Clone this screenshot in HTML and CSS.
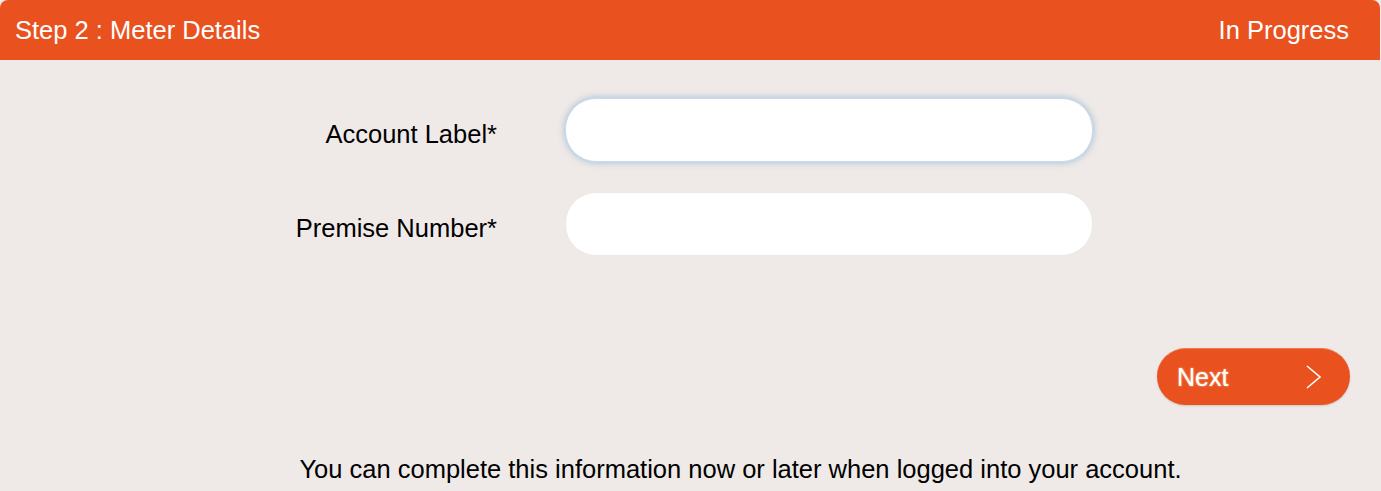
FILE: index.html
```html
<!DOCTYPE html>
<html lang="en">
<head>
    <meta charset="UTF-8">
    <meta name="viewport" content="width=device-width, initial-scale=1.0">
    <title>Meter Details</title>
    <link rel="stylesheet" href="styles.css">
</head>
<body>
    <div class="step-header">
        <span class="step-title">Step 2 : Meter Details</span>
        <span class="step-status">In Progress</span>
    </div>

    <div class="step-body">
        <div class="form-row">
            <label class="form-label" for="accountLabel">Account Label*</label>
            <input class="form-input is-focused" type="text" id="accountLabel" autofocus>
        </div>
        <div class="form-row">
            <label class="form-label" for="premiseNumber">Premise Number*</label>
            <input class="form-input" type="text" id="premiseNumber">
        </div>

        <div class="actions">
            <button class="next-button">
                <span>Next</span>
                <svg class="chevron" width="16" height="24" viewBox="0 0 16 24">
                    <polyline points="1,1 14,12 1,23" fill="none" stroke="#fff" stroke-width="1.6"/>
                </svg>
            </button>
        </div>

        <p class="note">You can complete this information now or later when logged into your account.</p>
    </div>
</body>
</html>
```

FILE: styles.css
```css
body {
    margin: 0;
    background-color: #EFEAE7;
    font-family: "Liberation Sans", Arial, sans-serif;
    color: #000;
}
.step-header {
    background-color: #E9511F;
    color: white;
    height: 60px;
    width: 1380px;
    box-sizing: border-box;
    border-radius: 8px 8px 0 0;
    display: flex;
    justify-content: space-between;
    align-items: center;
    padding: 0 31px 0 15px;
    font-size: 25.5px;
}
.step-body {
    padding-top: 38px;
}
.form-row {
    display: flex;
    align-items: center;
    margin-bottom: 30px;
}
.form-label {
    width: 497px;
    text-align: right;
    font-size: 25.5px;
    margin-right: 68px;
    padding-top: 8px;
}
.form-input {
    width: 528px;
    height: 64px;
    box-sizing: border-box;
    border: 1px solid #ECE8E6;
    border-radius: 31px;
    background: #fff;
    padding: 0 14px;
    font-family: inherit;
    font-size: 25.5px;
    outline: none;
    caret-color: #333;
}
.form-input.is-focused {
    border-color: #C9DCEB;
    box-shadow: 0 0 6px 1px rgba(120, 165, 205, 0.55);
}
.actions {
    display: flex;
    justify-content: flex-end;
    padding-right: 31px;
    margin-top: 92px;
}
.next-button {
    width: 193px;
    height: 57px;
    border: none;
    border-top: 1px solid #EF7A52;
    border-radius: 29px;
    background-color: #E9511F;
    box-shadow: 0 1px 2px rgba(0, 0, 0, 0.15);
    color: white;
    font-family: inherit;
    font-size: 25px;
    display: flex;
    align-items: center;
    justify-content: space-between;
    padding: 0 28px 0 20px;
    text-shadow: 0 0 2px rgba(255, 240, 200, 0.9);
    cursor: pointer;
}
.chevron {
    display: block;
}
.note {
    margin: 50px 0 0;
    padding-left: 100px;
    text-align: center;
    font-size: 25.5px;
}
```
